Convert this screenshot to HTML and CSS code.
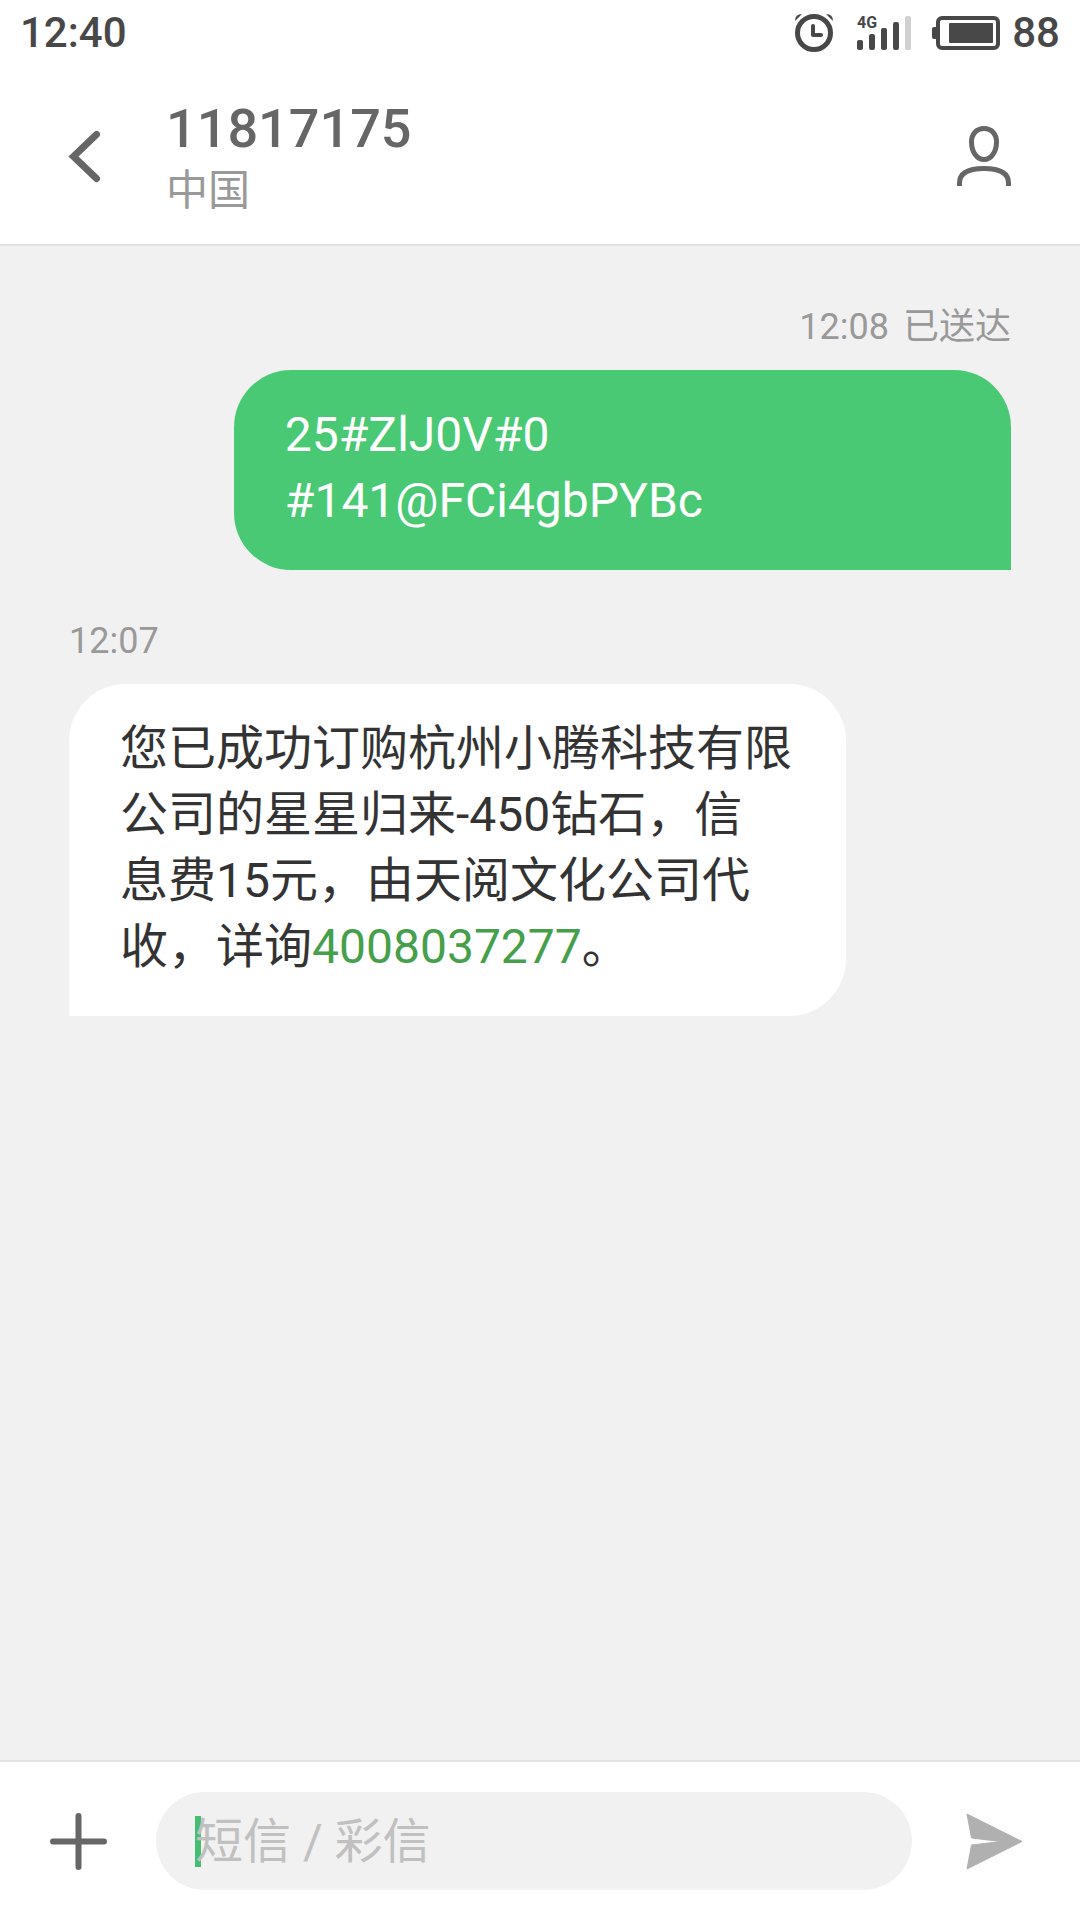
FILE: index.html
```html
<!DOCTYPE html>
<html lang="zh-CN">
<head>
    <meta charset="UTF-8">
    <meta name="viewport" content="width=device-width, initial-scale=1">
    <title>11817175</title>
    <link rel="stylesheet" href="styles.css">
</head>
<body>
    <div class="status">
        <span>12:40</span>
        <div class="status-icons">
            <svg class="alarm" width="38" height="38" viewBox="0 0 38 38">
                <circle cx="19" cy="19" r="16.5" fill="none" stroke="#484848" stroke-width="5"/>
                <path d="M18 12v9h8" fill="none" stroke="#484848" stroke-width="4" stroke-linecap="round" stroke-linejoin="round"/>
                <path d="M0 7Q0 0 7 0L0 7zM38 7Q38 0 31 0z" fill="#484848"/>
            </svg>
            <svg class="signal" width="54" height="34" viewBox="0 0 54 34">
                <text class="net" x="0" y="12">4G</text>
                <g fill="#484848">
                    <rect x="0" y="24" width="6" height="10" rx="2"/>
                    <rect x="12" y="18" width="6" height="16" rx="2"/>
                    <rect x="24" y="12" width="6" height="22" rx="2"/>
                    <rect x="36" y="6" width="6" height="28" rx="2"/>
                </g>
                <rect x="48" y="0" width="6" height="34" rx="2" fill="#d0d0d0"/>
            </svg>
            <svg class="battery" width="68" height="34" viewBox="0 0 68 34">
                <path d="M5 11H2Q0 11 0 13v8Q0 23 2 23h3z" fill="#484848"/>
                <rect x="6" y="2" width="60" height="30" rx="4" fill="none" stroke="#484848" stroke-width="4"/>
                <rect x="17" y="7" width="44" height="20" rx="1" fill="#484848"/>
            </svg>
            <span>88</span>
        </div>
    </div>

    <header class="header">
        <button class="icon-btn back" aria-label="返回">
            <svg width="31" height="51" viewBox="0 0 31 51">
                <path d="M27.500 3.500L4.500 25.500l23 22" fill="none" stroke="#666" stroke-width="7" stroke-linecap="round"/>
            </svg>
        </button>
        <div class="contact">
            <h1>11817175</h1>
            <p>中国</p>
        </div>
        <button class="icon-btn" aria-label="联系人">
            <svg width="54" height="60" viewBox="0 0 54 60">
                <g fill="none" stroke="#666" stroke-width="5">
                    <path d="M27 2.500c7.500 0 12.500 5.500 12.500 13.500 0 10-5.500 17.500-12.500 17.500S14.500 26 14.500 16C14.500 8 19.500 2.500 27 2.500z"/>
                    <path d="M2.500 60v-3C2.500 47 11 42.500 27 42.500S51.500 47 51.500 57v3"/>
                </g>
            </svg>
        </button>
    </header>

    <main class="chat">
        <div class="msg sent">
            <div class="time"><span>12:08</span><span>已送达</span></div>
            <div class="bubble">25#ZlJ0V#0<br>#141@FCi4gbPYBc</div>
        </div>
        <div class="msg">
            <div class="time"><span>12:07</span></div>
            <div class="bubble">您已成功订购杭州小腾科技有限<br>公司的星星归来-450钻石，信<br>息费15元，由天阅文化公司代<br>收，详询<a href="tel:4008037277">4008037277</a>。</div>
        </div>
    </main>

    <footer class="composer">
        <button class="icon-btn" aria-label="添加">
            <svg width="57" height="57" viewBox="0 0 57 57">
                <path d="M28.500 3v51M3 28.500h51" fill="none" stroke="#666" stroke-width="6" stroke-linecap="round"/>
            </svg>
        </button>
        <div class="field">
            <span class="caret"></span>
            <input type="text" placeholder="短信 / 彩信" aria-label="短信 / 彩信">
        </div>
        <button class="icon-btn" aria-label="发送">
            <svg width="57" height="57" viewBox="0 0 57 57">
                <path d="M1 1L56 28.500 1 56 5.500 32 35 28.500 5.500 25z" fill="#b0b0b0" stroke="#b0b0b0" stroke-linejoin="round"/>
            </svg>
        </button>
    </footer>
</body>
</html>
```
FILE: styles.css
```css
*{
    margin: 0;
    padding: 0;
    box-sizing: border-box;
}
body{
    display: flex;
    flex-direction: column;
    min-height: 100vh;
    background: #fff;
    font-family: Roboto, "Noto Sans CJK SC", sans-serif;
}
svg{
    display: block;
    overflow: visible;
}
.status{
    display: flex;
    justify-content: space-between;
    padding: 0 20px;
    color: #484848;
    font-size: 42px;
    font-weight: 500;
    line-height: 66px;
}
.status-icons{
    display: flex;
    align-items: center;
}
.alarm{
    margin-right: 24px;
}
.signal{
    margin-right: 21px;
}
.battery{
    margin-right: 12px;
}
.net{
    fill: #484848;
    font-size: 16px;
    font-weight: 700;
}
.icon-btn{
    flex: none;
    border: none;
    background: none;
}
.header{
    display: flex;
    align-items: center;
    height: 180px;
    padding: 2px 69px 0;
    border-bottom: 2px solid #e3e3e3;
}
.back{
    margin-right: 66px;
}
.contact{
    flex: 1;
}
.contact h1{
    color: #666;
    font-size: 54px;
    font-weight: 500;
    line-height: 70px;
}
.contact p{
    color: #999;
    font-size: 42px;
    line-height: 54px;
}
.chat{
    flex: 1;
    display: flex;
    flex-direction: column;
    gap: 50px;
    padding: 60px 69px;
    background: #f1f1f1;
}
.msg{
    display: flex;
    flex-direction: column;
    align-items: flex-start;
    gap: 22px;
}
.sent{
    align-items: flex-end;
}
.time{
    display: flex;
    gap: 14px;
    color: #999;
    font-size: 36px;
    line-height: 42px;
}
.bubble{
    width: 82.5%;
    padding: 32px 51px 36px;
    border-radius: 57px 57px 57px 0;
    background: #fff;
    color: #333;
    font-size: 48px;
    line-height: 66px;
}
.sent .bubble{
    border-radius: 57px 57px 0 57px;
    background: #4ac975;
    color: #fff;
}
.bubble a{
    color: #469f4a;
    text-decoration: none;
}
.composer{
    display: flex;
    align-items: center;
    height: 160px;
    padding: 0 57px 0 50px;
    border-top: 2px solid #e3e3e3;
}
.field{
    position: relative;
    flex: 1;
    height: 98px;
    margin: 0 54px 0 49px;
    border-radius: 49px;
    background: #f1f1f1;
}
.field input{
    position: relative;
    width: 100%;
    height: 100%;
    padding: 0 39px;
    border: none;
    outline: none;
    background: none;
    color: #333;
    font-family: inherit;
    font-size: 48px;
}
.field input::placeholder{
    color: #c0c0c0;
}
/* text cursor, sits under the placeholder */
.caret{
    position: absolute;
    top: 24px;
    left: 39px;
    width: 6px;
    height: 51px;
    background: #46be70;
}
```
